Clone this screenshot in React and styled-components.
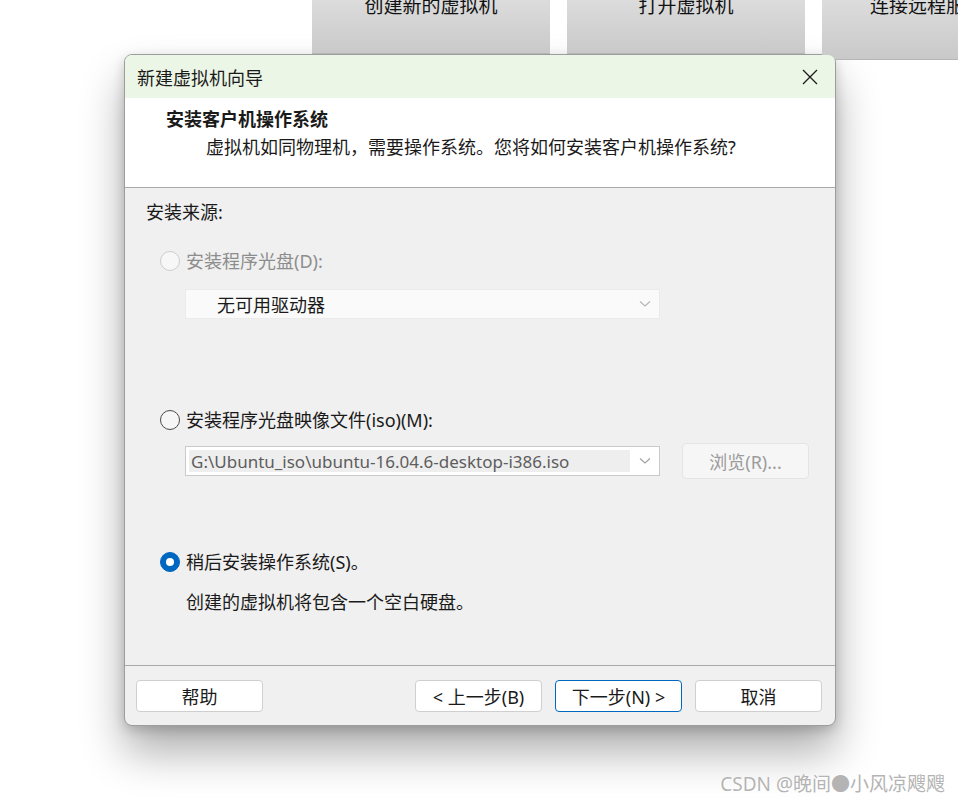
import React from 'react';
import styled, { createGlobalStyle } from 'styled-components';

// --- Palette ---
const colors = {
  page: '#ffffff',
  tileTop: '#dcdcdc',
  tileBottom: '#c9c9c9',
  titleBar: '#ecf6e6',
  header: '#ffffff',
  body: '#f0f0f0',
  rule: '#a9a9a9',
  text: '#1a1a1a',
  muted: '#8d8d8d',
  accent: '#0067c0',
  buttonBorder: '#cfcfcf',
};

const fontStack = '"Noto Sans", "Noto Sans CJK SC", sans-serif';

const GlobalStyle = createGlobalStyle`
  html, body {
    margin: 0;
    padding: 0;
    background: ${colors.page};
  }
  body {
    font-family: ${fontStack};
    color: ${colors.text};
    overflow: hidden;
  }
  * { box-sizing: border-box; }
`;

const Page = styled.div`
  position: relative;
  width: 958px;
  height: 804px;
  overflow: hidden;
`;

// --- Background launcher tiles ---
const TileRow = styled.div`
  display: flex;
  gap: 17px;
  padding-left: 312px;
  height: 54px;
`;

const Tile = styled.div`
  flex: 0 0 ${p => p.$w || 238}px;
  height: ${p => p.$h || 54}px;
  background: linear-gradient(${colors.tileTop}, ${colors.tileBottom});
  border-bottom: 1px solid #b5b5b5;
  display: flex;
  justify-content: ${p => (p.$left ? 'flex-start' : 'center')};
  padding-left: ${p => (p.$left ? 48 : 0)}px;
  overflow: hidden;
`;

const TileLabel = styled.span`
  font-size: 19px;
  line-height: 20px;
  margin-top: -4px;
  color: #111;
  white-space: nowrap;
`;

// --- Dialog window ---
const Dialog = styled.div`
  margin-left: 124px;
  width: 712px;
  height: 672px;
  border: 1px solid #9d9d9d;
  border-radius: 8px;
  overflow: hidden;
  display: flex;
  flex-direction: column;
  box-shadow: 0 26px 44px rgba(0, 0, 0, 0.32), 0 4px 12px rgba(0, 0, 0, 0.18);
  background: ${colors.body};
`;

const TitleBar = styled.div`
  height: 43px;
  flex: 0 0 43px;
  background: ${colors.titleBar};
  display: flex;
  align-items: center;
  justify-content: space-between;
  padding: 0 14px 0 12px;
  font-size: 18px;
`;

const CloseButton = styled.button`
  border: none;
  background: transparent;
  padding: 0;
  width: 22px;
  height: 22px;
  display: flex;
  align-items: center;
  justify-content: center;
  cursor: pointer;
`;

const Header = styled.div`
  background: ${colors.header};
  height: 90px;
  flex: 0 0 90px;
  border-bottom: 1px solid ${colors.rule};
  padding: 9px 0 0 41px;
`;

const HeaderTitle = styled.div`
  font-size: 18px;
  font-weight: 700;
  line-height: 24px;
`;

const HeaderSub = styled.div`
  font-size: 18px;
  line-height: 24px;
  margin: 4px 0 0 40px;
`;

const Body = styled.div`
  flex: 1;
  padding: 12px 0 0 21px;
  border-bottom: 1px solid ${colors.rule};
`;

const SectionLabel = styled.div`
  font-size: 18px;
  line-height: 24px;
`;

const RadioRow = styled.label`
  display: flex;
  align-items: center;
  gap: 6px;
  margin: ${p => p.$mt}px 0 0 14px;
  font-size: 18px;
  line-height: 24px;
  color: ${p => (p.$disabled ? colors.muted : colors.text)};
`;

const RadioDot = styled.span`
  width: 20px;
  height: 20px;
  border-radius: 50%;
  flex: 0 0 20px;
  background: ${p => (p.$checked ? colors.accent : p.$disabled ? '#f7f7f7' : '#f6f6f6')};
  border: 1px solid
    ${p => (p.$checked ? colors.accent : p.$disabled ? '#cdcdcd' : '#4a4a4a')};
  display: flex;
  align-items: center;
  justify-content: center;

  &::after {
    content: '';
    display: ${p => (p.$checked ? 'block' : 'none')};
    width: 8px;
    height: 8px;
    border-radius: 50%;
    background: #fff;
  }
`;

const FieldRow = styled.div`
  display: flex;
  align-items: center;
  gap: 22px;
  margin: ${p => p.$mt}px 0 0 39px;
`;

const Select = styled.div`
  width: 475px;
  height: 30px;
  border: 1px solid ${p => (p.$disabled ? '#ebebeb' : '#cacaca')};
  background: ${p => (p.$disabled ? '#fafafa' : '#ffffff')};
  display: flex;
  align-items: center;
  padding: 3px 0 3px 3px;
`;

const SelectText = styled.div`
  flex: 0 0 ${p => p.$w}px;
  height: 100%;
  display: flex;
  align-items: center;
  padding-left: ${p => p.$pl}px;
  background: ${p => (p.$highlight ? '#eeeeee' : 'transparent')};
  font-size: ${p => p.$fs || 18}px;
  color: ${p => (p.$gray ? '#5d5d5d' : colors.text)};
  white-space: nowrap;
  overflow: hidden;
`;

const Chevron = styled.span`
  margin-left: auto;
  margin-right: 8px;
  display: flex;
`;

const BrowseButton = styled.button`
  width: 127px;
  height: 36px;
  border: 1px solid #e4e4e4;
  border-radius: 4px;
  background: #f6f6f6;
  color: #9c9c9c;
  font-family: ${fontStack};
  font-size: 18px;
`;

const Note = styled.div`
  font-size: 18px;
  line-height: 24px;
  margin: 16px 0 0 40px;
`;

const Footer = styled.div`
  flex: 0 0 59px;
  display: flex;
  align-items: flex-start;
  padding: 14px 13px 0 11px;
  gap: 13px;
`;

const Spacer = styled.div`
  flex: 1;
`;

const Button = styled.button`
  width: 127px;
  height: 32px;
  border: 1px solid ${p => (p.$primary ? colors.accent : colors.buttonBorder)};
  border-radius: 4px;
  background: #ffffff;
  color: ${colors.text};
  font-family: ${fontStack};
  font-size: 18px;
  padding: 0;
  cursor: pointer;
`;

const Watermark = styled.div`
  position: absolute;
  right: 13px;
  bottom: 7px;
  font-size: 19px;
  color: #b4b4b4;
  text-shadow: 0 0 1px #fff, 1px 1px 0 #ffffff;
`;

const ChevronIcon = ({ color }) => (
  <svg width="12" height="8" viewBox="0 0 12 8">
    <path d="M1 1.5 L6 6 L11 1.5" fill="none" stroke={color} strokeWidth="1.1" />
  </svg>
);

const CloseIcon = () => (
  <svg width="16" height="16" viewBox="0 0 16 16">
    <path d="M1 1 L15 15 M15 1 L1 15" stroke="#1a1a1a" strokeWidth="1.3" />
  </svg>
);

export default function App() {
  return (
    <Page>
      <GlobalStyle />
      <TileRow>
        <Tile><TileLabel>创建新的虚拟机</TileLabel></Tile>
        <Tile><TileLabel>打开虚拟机</TileLabel></Tile>
        <Tile $w={150} $h={60} $left><TileLabel>连接远程服务器</TileLabel></Tile>
      </TileRow>

      <Dialog>
        <TitleBar>
          <span>新建虚拟机向导</span>
          <CloseButton aria-label="close"><CloseIcon /></CloseButton>
        </TitleBar>

        <Header>
          <HeaderTitle>安装客户机操作系统</HeaderTitle>
          <HeaderSub>虚拟机如同物理机，需要操作系统。您将如何安装客户机操作系统?</HeaderSub>
        </Header>

        <Body>
          <SectionLabel>安装来源:</SectionLabel>

          <RadioRow $mt={25} $disabled>
            <RadioDot $disabled />
            安装程序光盘(D):
          </RadioRow>
          <FieldRow $mt={16}>
            <Select $disabled>
              <SelectText $w={200} $pl={28}>无可用驱动器</SelectText>
              <Chevron><ChevronIcon color="#b5b5b5" /></Chevron>
            </Select>
          </FieldRow>

          <RadioRow $mt={89}>
            <RadioDot />
            安装程序光盘映像文件(iso)(M):
          </RadioRow>
          <FieldRow $mt={11}>
            <Select>
              <SelectText $w={441} $pl={2} $fs={17} $highlight $gray>
                G:\Ubuntu_iso\ubuntu-16.04.6-desktop-i386.iso
              </SelectText>
              <Chevron><ChevronIcon color="#a0a0a0" /></Chevron>
            </Select>
            <BrowseButton disabled>浏览(R)...</BrowseButton>
          </FieldRow>

          <RadioRow $mt={71}>
            <RadioDot $checked />
            稍后安装操作系统(S)。
          </RadioRow>
          <Note>创建的虚拟机将包含一个空白硬盘。</Note>
        </Body>

        <Footer>
          <Button>帮助</Button>
          <Spacer />
          <Button>&lt; 上一步(B)</Button>
          <Button $primary>下一步(N) &gt;</Button>
          <Button>取消</Button>
        </Footer>
      </Dialog>

      <Watermark>CSDN @晚间●小风凉飕飕</Watermark>
    </Page>
  );
}
